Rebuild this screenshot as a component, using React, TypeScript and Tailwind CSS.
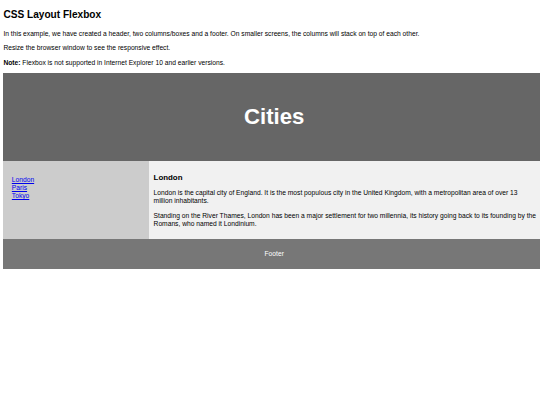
export default function App() {
  const cities = ["London", "Paris", "Tokyo"]

  return (
    <div className="min-h-[405px] overflow-hidden bg-white">
      <div className="w-[545px] pl-[3.4px] pt-[9px] font-['Liberation_Sans',Arial,sans-serif] text-[6.7px] leading-[8px] text-black">
        <h2 className="mb-[8.6px] text-[10.125px] leading-[12px] font-bold">CSS Layout Flexbox</h2>
        <p className="mb-[6.6px]">
          In this example, we have created a header, two columns/boxes and a footer. On smaller screens, the columns will stack on top of each other.
        </p>
        <p className="mb-[6.6px]">Resize the browser window to see the responsive effect.</p>
        <p className="mb-[6.5px]">
          <strong>Note:</strong> Flexbox is not supported in Internet Explorer 10 and earlier versions.
        </p>

        {/* Header */}
        <header className="bg-[#666] px-[12.66px] py-[12.66px] text-center text-white">
          <h2 className="my-[18.4px] text-[22.15px] leading-[25.5px] font-bold">Cities</h2>
        </header>

        {/* Columns */}
        <section className="flex">
          <nav className="flex-1 bg-[#ccc] p-[8.44px]">
            <ul className="my-[6.75px] list-none p-0">
              {cities.map((city) => (
                <li key={city}>
                  <a href="#" className="text-[#0000ee] underline">
                    {city}
                  </a>
                </li>
              ))}
            </ul>
          </nav>
          <article className="flex-[3] bg-[#f1f1f1] p-[4.22px]">
            <h3 className="my-[7.6px] text-[7.9px] leading-[9px] font-bold">London</h3>
            <p className="mb-[6.75px]">
              London is the capital city of England. It is the most populous city in the United Kingdom, with a metropolitan area of over 13
              <br />
              million inhabitants.
            </p>
            <p className="mb-[6.75px]">
              Standing on the River Thames, London has been a major settlement for two millennia, its history going back to its founding by the Romans, who named it Londinium.
            </p>
          </article>
        </section>

        {/* Footer */}
        <footer className="bg-[#777] p-[4.22px] text-center text-white">
          <p className="my-[6.75px]">Footer</p>
        </footer>
      </div>
    </div>
  )
}
